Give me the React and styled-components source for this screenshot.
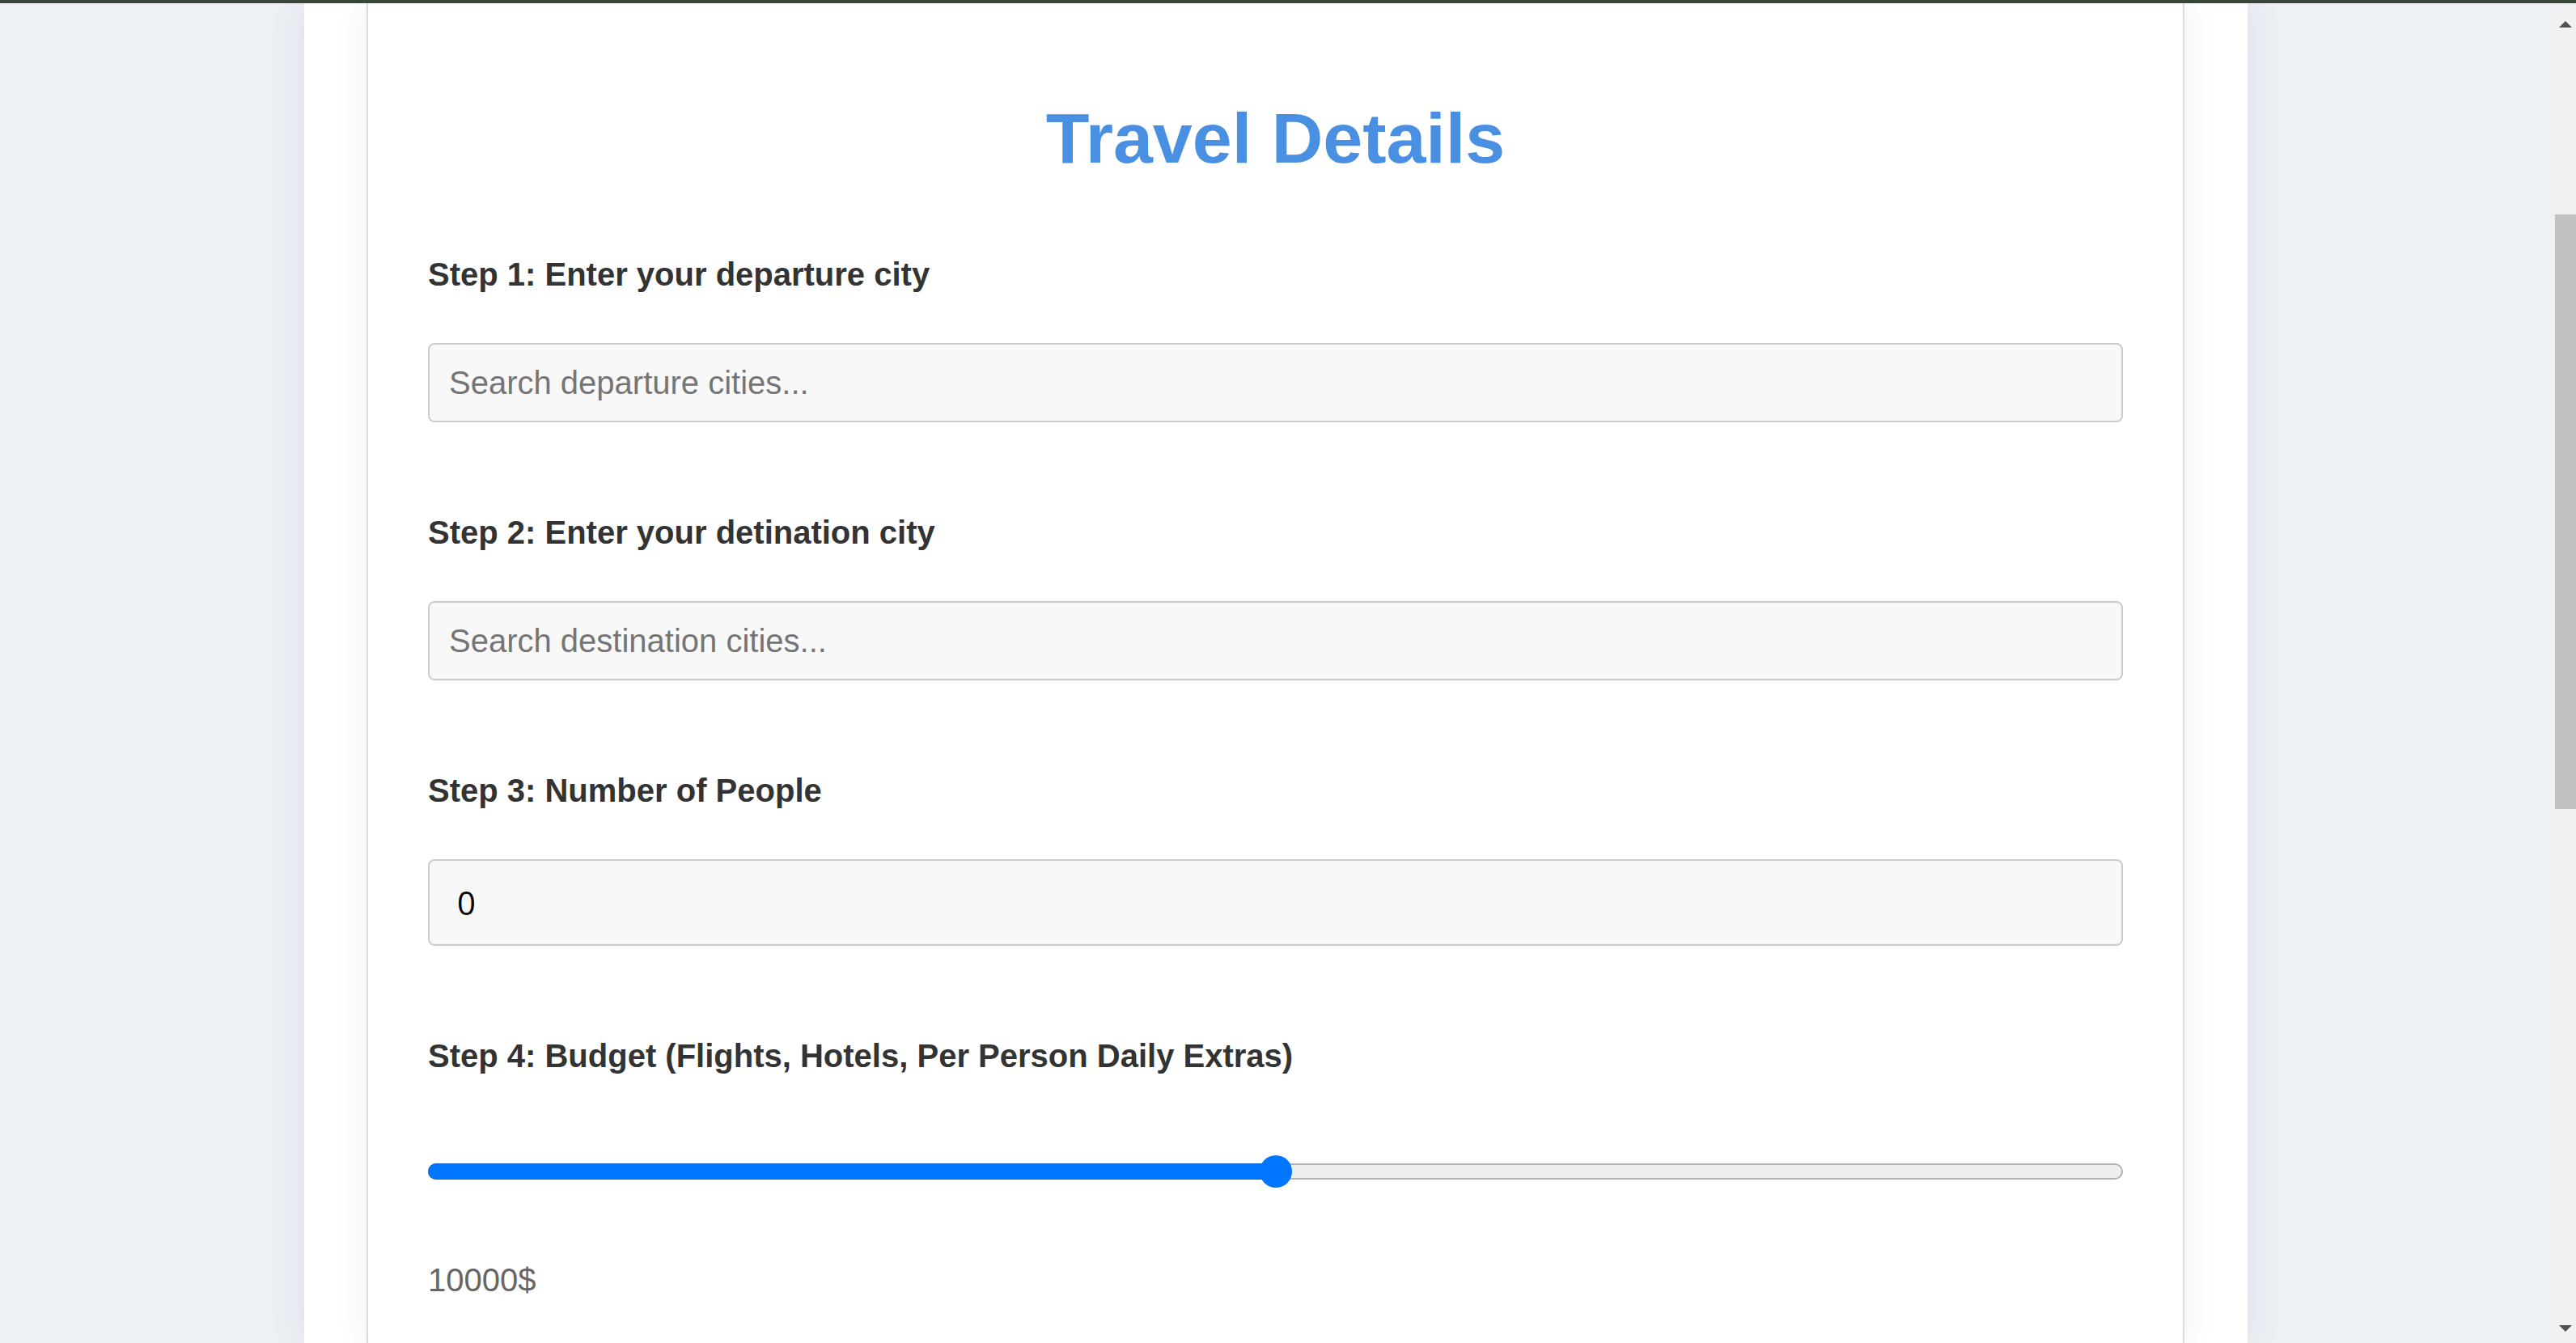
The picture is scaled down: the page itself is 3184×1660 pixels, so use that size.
import React from "react";
import styled, { createGlobalStyle } from "styled-components";

const GlobalStyle = createGlobalStyle`
  html, body {
    margin: 0;
    padding: 0;
    height: 100%;
    overflow: hidden;
  }
  body {
    font-family: "Liberation Sans", Arial, sans-serif;
    background: #edf0f5;
  }
  #root {
    height: 100%;
  }
`;

const Page = styled.div`
  height: 100vh;
  display: flex;
  flex-direction: column;
`;

const TopBar = styled.div`
  height: 4px;
  flex-shrink: 0;
  background: #38463a;
`;

const Viewport = styled.div`
  flex: 1;
  min-height: 0;
  display: flex;
  overflow: hidden;
`;

const Main = styled.main`
  flex: 1;
  display: flex;
  justify-content: center;
  padding-right: 4px;
  background: #edf0f5;
  overflow: hidden;
`;

const Shell = styled.div`
  box-sizing: border-box;
  width: 2402px;
  padding-left: 77px;
  display: flex;
  background: #ffffff;
  box-shadow: 0 0 44px rgba(40, 55, 80, 0.09);
`;

const Card = styled.section`
  box-sizing: border-box;
  width: 2247px;
  padding: 118px 74px 0;
  background: #ffffff;
  border-left: 2px solid #dcdcdc;
  border-right: 2px solid #dcdcdc;
  box-shadow: 0 0 40px rgba(0, 0, 0, 0.07);
`;

const Title = styled.h1`
  margin: 0 0 97px;
  text-align: center;
  font-size: 88px;
  line-height: 98px;
  font-weight: 700;
  color: #4a90e2;
`;

const Field = styled.div`
  margin-bottom: 114px;
`;

const Label = styled.label`
  display: block;
  margin-bottom: 62px;
  font-size: 40px;
  line-height: 45px;
  font-weight: 700;
  color: #333333;
`;

const TextInput = styled.input`
  display: block;
  box-sizing: border-box;
  width: 100%;
  height: 98px;
  padding: 0 24px;
  border: 2px solid #cccccc;
  border-radius: 8px;
  background: #f8f8f8;
  font-family: "Liberation Sans", Arial, sans-serif;
  font-size: 40px;
  color: #000000;
  outline: none;

  &::placeholder {
    color: #757575;
  }
`;

const NumberInput = styled(TextInput)`
  height: 107px;
  padding: 0 34px;
  font-family: "Open Sans", "Noto Sans", sans-serif;

  &::-webkit-inner-spin-button,
  &::-webkit-outer-spin-button {
    -webkit-appearance: none;
    margin: 0;
  }
`;

const Slider = styled.div`
  height: 40px;
  margin-top: 100px;
  display: flex;
  align-items: center;
`;

const Track = styled.div`
  position: relative;
  box-sizing: border-box;
  width: 100%;
  height: 20px;
  border: 2px solid #b2b2b2;
  border-radius: 10px;
  background: #efefef;
`;

const Fill = styled.div`
  position: absolute;
  left: -2px;
  top: -2px;
  bottom: -2px;
  background: #0075ff;
  border-radius: 10px 0 0 10px;
  box-shadow: inset 0 1px 0 rgba(40, 80, 150, 0.45), inset 0 -1px 0 rgba(40, 80, 150, 0.45);
`;

const Thumb = styled.div`
  position: absolute;
  top: 50%;
  width: 40px;
  height: 40px;
  margin: -20px 0 0 -20px;
  border-radius: 50%;
  background: #0075ff;
`;

const BudgetValue = styled.div`
  margin-top: 92px;
  font-size: 40px;
  line-height: 45px;
  color: #666666;
`;

const Scrollbar = styled.div`
  width: 26px;
  flex-shrink: 0;
  display: flex;
  flex-direction: column;
  background: #f1f1f1;
`;

const ArrowButton = styled.div`
  height: 44px;
  flex-shrink: 0;
  display: flex;
  justify-content: center;
  align-items: ${(p) => (p.$down ? "flex-start" : "flex-end")};
  padding: ${(p) => (p.$down ? "22px 0 0" : "0 0 14px")};
  box-sizing: border-box;

  &::before {
    content: "";
    width: 0;
    height: 0;
    border-left: 8px solid transparent;
    border-right: 8px solid transparent;
    ${(p) =>
      p.$down
        ? "border-top: 8px solid #505050;"
        : "border-bottom: 8px solid #505050;"}
  }
`;

const ScrollTrack = styled.div`
  flex: 1;
  padding-top: 217px;
`;

const ScrollThumb = styled.div`
  height: 735px;
  background: #c1c1c1;
`;

export default function App() {
  const budget = 10000;
  const max = 20000;
  const pct = (budget / max) * 100;

  return (
    <Page>
      <GlobalStyle />
      <TopBar />
      <Viewport>
        <Main>
          <Shell>
            <Card>
              <Title>Travel Details</Title>

              <Field>
                <Label>Step 1: Enter your departure city</Label>
                <TextInput type="text" placeholder="Search departure cities..." />
              </Field>

              <Field>
                <Label>Step 2: Enter your detination city</Label>
                <TextInput type="text" placeholder="Search destination cities..." />
              </Field>

              <Field>
                <Label>Step 3: Number of People</Label>
                <NumberInput type="number" defaultValue={0} />
              </Field>

              <div>
                <Label>Step 4: Budget (Flights, Hotels, Per Person Daily Extras)</Label>
                <Slider>
                  <Track>
                    <Fill style={{ width: `calc(${pct}% + 2px)` }} />
                    <Thumb style={{ left: `${pct}%` }} />
                  </Track>
                </Slider>
                <BudgetValue>{budget}$</BudgetValue>
              </div>
            </Card>
          </Shell>
        </Main>
        <Scrollbar>
          <ArrowButton />
          <ScrollTrack>
            <ScrollThumb />
          </ScrollTrack>
          <ArrowButton $down />
        </Scrollbar>
      </Viewport>
    </Page>
  );
}
